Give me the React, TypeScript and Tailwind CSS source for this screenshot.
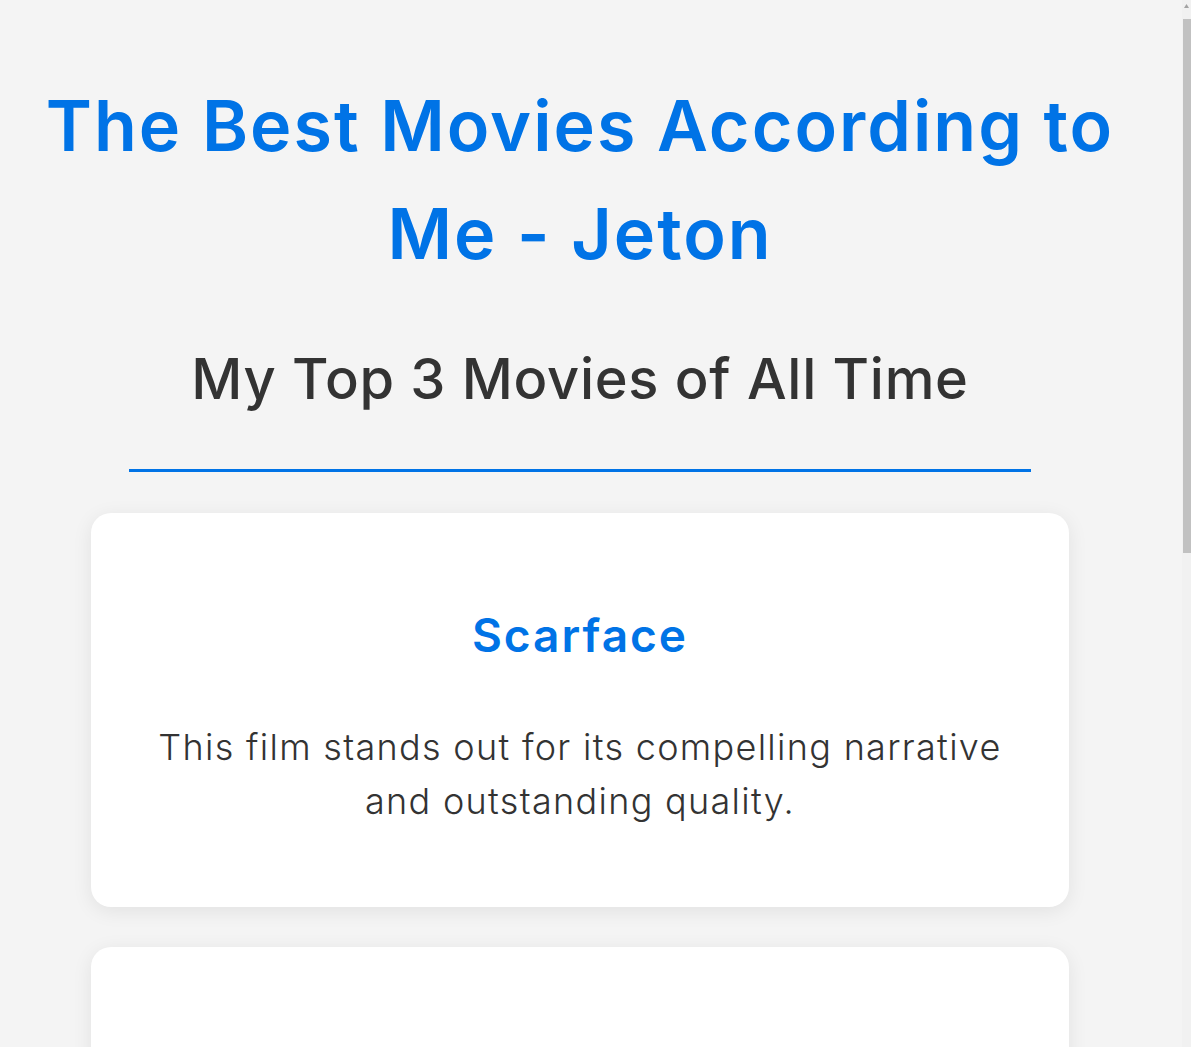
import React from 'react';

const movies = [
  { title: 'Scarface', text: 'This film stands out for its compelling narrative and outstanding quality.' },
  { title: 'The Godfather', text: 'This film stands out for its compelling narrative and outstanding quality.' },
  { title: 'Goodfellas', text: 'This film stands out for its compelling narrative and outstanding quality.' },
];

export default function App() {
  return (
    <div className="min-h-screen bg-[#f4f4f4] text-[#333] font-['Inter',sans-serif]">
      <div className="w-[1160px] text-center pt-[72px] pb-[208px]">
        <h1 className="text-[70px] leading-[108px] font-semibold tracking-[2px] text-[#0073e6] px-[40px]">
          The Best Movies According to Me - Jeton
        </h1>

        <h2 className="mt-[58px] text-[56px] leading-[67px] font-medium tracking-[0.7px]">
          My Top 3 Movies of All Time
        </h2>

        <div className="mx-auto mt-[56px] w-[902px] h-[3px] bg-[#0073e6]" />

        {/* Movie cards */}
        <div className="mx-[91px] mt-[41px] flex flex-col gap-[40px]">
          {movies.map((movie) => (
            <div
              key={movie.title}
              className="bg-white rounded-[20px] shadow-[0_4px_20px_rgba(0,0,0,0.08)] px-10 pt-[96px] pb-[79px]"
            >
              <h3 className="text-[46px] leading-[52px] font-semibold tracking-[2px] text-[#0073e6]">
                {movie.title}
              </h3>
              <p className="mt-[59px] text-[36px] leading-[54px] font-light tracking-[1.3px]">{movie.text}</p>
            </div>
          ))}
        </div>
      </div>

      {/* scrollbar */}
      <div className="fixed top-0 right-0 w-[9px] h-full bg-[#f1f1f1]">
        <svg className="absolute top-[4px] left-[2px]" width="5" height="4" viewBox="0 0 5 4">
          <path d="M2.5 0L5 4H0z" fill="#a3a3a3" />
        </svg>
        <div className="absolute top-[19px] left-[1px] w-[8px] h-[534px] bg-[#c1c1c1]" />
      </div>
    </div>
  );
}
